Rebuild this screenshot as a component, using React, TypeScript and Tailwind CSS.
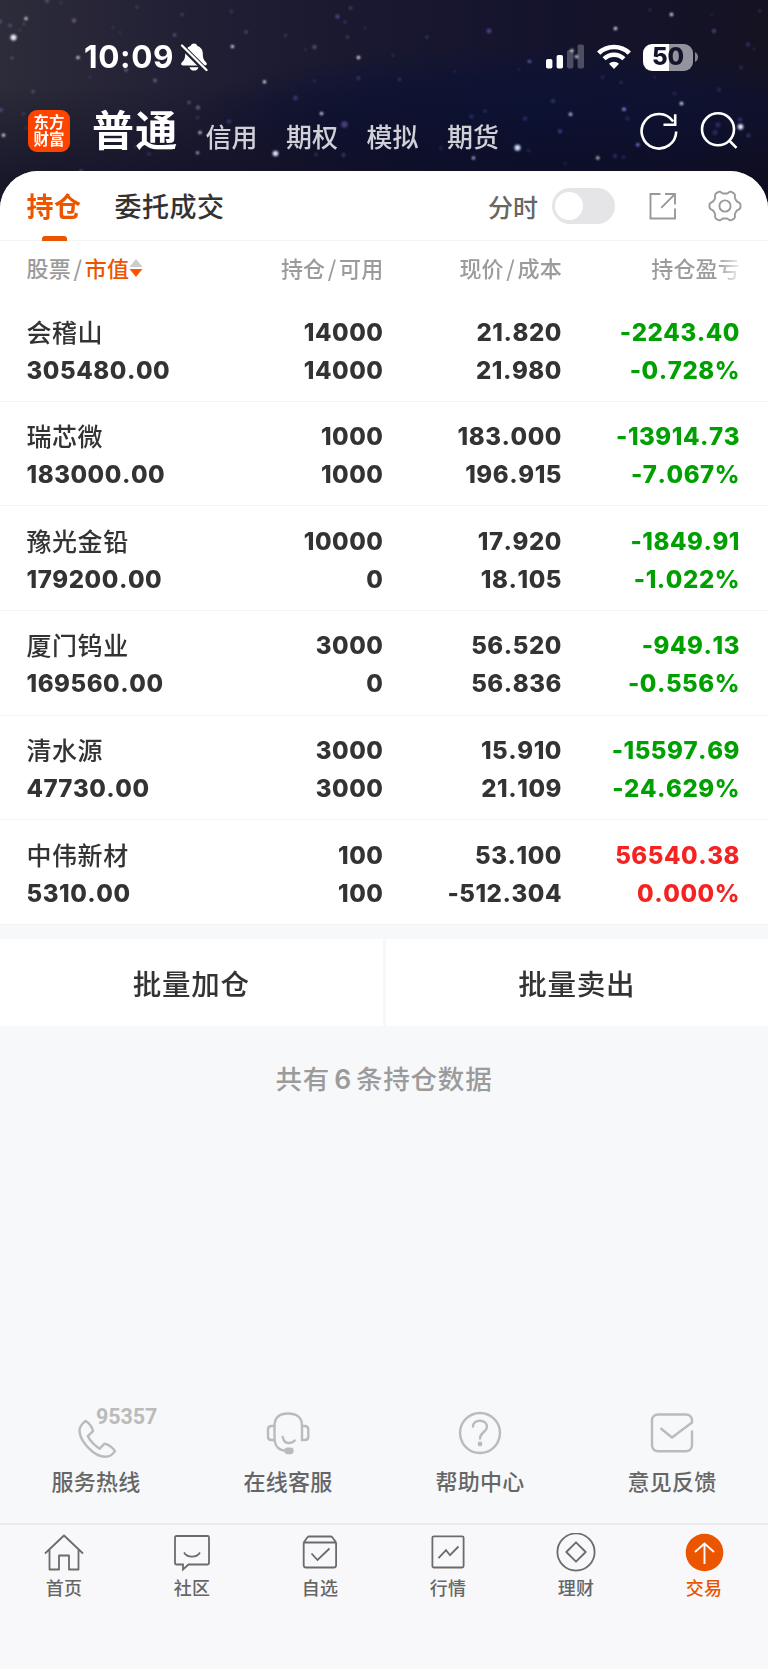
import React from "react";

const cjk = "font-['Noto_Sans_CJK_SC','Noto_Sans',sans-serif]";
const num = "font-['Inter','Noto_Sans_CJK_SC',sans-serif]";

// x, y, radius, colour, opacity
const stars: [number, number, number, string, number][] = [
  [26, 18.5, 1.6, "#ffffff", 0.9], [13.5, 37.5, 3, "#e8eaff", 1], [10, 25.5, 1.8, "#8a80b8", 0.6], [24, 24, 1.5, "#8a80b8", 0.5],
  [20, 30, 1.5, "#6f6796", 0.4], [0, 21.5, 2, "#8a80b8", 0.6], [74, 20.5, 2, "#a79cc8", 0.7], [47, 1, 2, "#8a80b8", 0.6],
  [61, 3, 1.4, "#6f6796", 0.5], [12, 58, 1.8, "#8a80b8", 0.5], [78, 57.5, 1.6, "#ffffff", 0.9], [126, 70, 2, "#8a80b8", 0.7],
  [155, 80.5, 2, "#9a8cc4", 0.7], [33, 91.5, 1.8, "#8a80b8", 0.6], [90, 77, 1.5, "#6f6796", 0.4], [113, 27.5, 1.5, "#6f6796", 0.4],
  [137, 7, 1.8, "#6f6796", 0.5], [120, 32.5, 1.2, "#6f6796", 0.4], [182, 14.5, 1.8, "#6f6796", 0.6], [174.5, 35, 1.8, "#8a80b8", 0.7],
  [232.5, 46.5, 1.6, "#ffffff", 0.95], [231.5, 11.5, 2, "#55508c", 0.6], [246, 32, 1.8, "#7468b8", 0.8], [285.5, 35.5, 1.8, "#55508c", 0.7],
  [264.5, 81.8, 1.6, "#ffffff", 0.95], [314.5, 47, 2.2, "#8c74b0", 0.7], [305.5, 49.5, 1.3, "#6f6796", 0.5], [337.5, 16.5, 2.2, "#6a5cc0", 0.8],
  [345, 22, 1.6, "#6f6796", 0.6], [350.5, 8, 1.8, "#6f6796", 0.7], [365, 28, 1.3, "#6f6796", 0.5], [347.5, 37, 1.8, "#6f6796", 0.6],
  [358.5, 57.5, 1.7, "#ffffff", 0.9], [358.5, 78, 2, "#5a5a9c", 0.6], [314.5, 81, 1.8, "#44447c", 0.6], [295.5, 98, 2.2, "#6a5cc0", 0.7],
  [321.5, 113.5, 1.6, "#ffffff", 0.95], [344.5, 124.5, 3.2, "#7d62c4", 0.75], [275.5, 153.5, 2.8, "#dfe4ff", 1], [197.5, 152.8, 1.5, "#c9ccff", 0.9],
  [200, 132.5, 1.6, "#ffffff", 0.85], [198, 107.5, 2, "#b08cc8", 0.8], [189, 102.5, 1.7, "#8a80b8", 0.7], [197.5, 117.5, 1.5, "#8a70a8", 0.5],
  [229, 121.5, 2.2, "#5c4c98", 0.7], [3.5, 135.2, 1.6, "#ffffff", 0.9], [1, 110, 2, "#7668b0", 0.7], [23.5, 113.5, 1.6, "#7668b0", 0.5],
  [26, 128, 1.5, "#7668b0", 0.4], [149, 154, 1.8, "#7668b0", 0.5], [135, 147, 1.5, "#7a5070", 0.5], [343.5, 155, 2, "#5a5aa8", 0.7],
  [316, 154.5, 2, "#44447c", 0.7], [81, 171, 1.5, "#b8b8d8", 0.6], [427, 37, 1.8, "#5a5aa8", 0.6], [489, 31, 2.4, "#6e60c4", 0.8],
  [393, 55.3, 1.5, "#5a5aa8", 0.5], [529.5, 61.5, 1.8, "#8090f0", 0.8], [519, 69.5, 1.5, "#44447c", 0.5], [399.5, 79.5, 2, "#5050a0", 0.6],
  [455, 71.5, 1.5, "#44447c", 0.5], [615.5, 28.5, 1.7, "#ffffff", 0.9], [671.5, 14.5, 1.7, "#ffffff", 0.9], [711.5, 14.5, 1.5, "#44447c", 0.5],
  [650, 10, 2, "#44447c", 0.5], [714, 31, 2.2, "#7a64b4", 0.7], [748, 44.5, 2, "#5a4c98", 0.7], [759.5, 11, 1.8, "#5a4c98", 0.5],
  [754, 49, 1.3, "#5a4c98", 0.5], [741, 67.5, 2, "#44447c", 0.6], [719, 89.5, 2, "#4c4890", 0.6], [674.5, 93.5, 2, "#4c4890", 0.5],
  [621, 82.5, 1.8, "#4c4890", 0.6], [602.5, 77, 2, "#4c4890", 0.5], [655, 77, 1.6, "#4c4890", 0.4], [553, 101, 2.2, "#5c54a8", 0.6],
  [485, 111, 1.8, "#5c54a8", 0.5], [471.5, 116.5, 2, "#5c54a8", 0.6], [525, 118.5, 2.2, "#5248a0", 0.6], [570.5, 114.3, 1.7, "#d8dcff", 0.9],
  [624, 109.2, 1.8, "#9aa0ff", 0.9], [681.5, 103.5, 1.7, "#ffffff", 0.9], [627.5, 118.5, 2, "#5248a0", 0.6], [560, 131.2, 2, "#6a6cd8", 0.7],
  [740.5, 126.7, 2.8, "#dfe4ff", 1], [740, 119.5, 2, "#5c54c8", 0.7], [748.5, 135.5, 2, "#5c54a8", 0.7], [718, 125, 2.4, "#5c54a8", 0.6],
  [715, 132.5, 2.6, "#5c54a8", 0.5], [637.8, 144.7, 1.8, "#7a84f0", 0.9], [517.5, 147.8, 3, "#cfe0ff", 1], [473.5, 157.9, 1.7, "#bcc8ff", 0.9],
  [597.8, 157.9, 1.7, "#e0e0f0", 0.9], [615, 156, 2.2, "#44449c", 0.7], [623.5, 157, 1.8, "#44449c", 0.7], [528.5, 150.5, 1.6, "#44449c", 0.7],
  [441, 148, 2, "#38387c", 0.6], [565, 163.5, 2, "#2c2c6c", 0.6], [572, 50.5, 1.6, "#ffffff", 0.9], [576.5, 56.7, 1.6, "#ffffff", 0.9],
];

function NightSky() {
  return (
    <svg className="absolute inset-0" width="768" height="240" viewBox="0 0 768 240" aria-hidden="true">
      <defs>
        <linearGradient id="sky" x1="0" y1="0" x2="1" y2="0">
          <stop offset="0" stopColor="#2d2c3a" />
          <stop offset="0.25" stopColor="#211f34" />
          <stop offset="0.48" stopColor="#191830" />
          <stop offset="0.75" stopColor="#14132c" />
          <stop offset="1" stopColor="#151222" />
        </linearGradient>
        <radialGradient id="blue" cx="0.5" cy="0.5" r="0.5">
          <stop offset="0" stopColor="#0d1436" />
          <stop offset="0.6" stopColor="#0e1333" stopOpacity="0.8" />
          <stop offset="1" stopColor="#0d1234" stopOpacity="0" />
        </radialGradient>
        <linearGradient id="fade" x1="0" y1="0" x2="0" y2="1">
          <stop offset="0.35" stopColor="#0b0a20" stopOpacity="0" />
          <stop offset="0.75" stopColor="#0b0a20" stopOpacity="0.6" />
        </linearGradient>
        <filter id="soft" x="-50%" y="-50%" width="200%" height="200%"><feGaussianBlur stdDeviation="0.8" /></filter>
      </defs>
      <rect width="768" height="240" fill="url(#sky)" />
      <ellipse cx="530" cy="118" rx="350" ry="72" fill="url(#blue)" />
      <rect width="768" height="240" fill="url(#fade)" />
      <g filter="url(#soft)">
        {stars.map(([x, y, r, c, o]) => (
          <circle key={`${x}-${y}`} cx={x} cy={y} r={r} fill={c} opacity={o < 0.85 ? o * 0.75 : o} />
        ))}
      </g>
    </svg>
  );
}

function StatusBar() {
  return (
    <div className={`${num} flex h-[114px] items-center pl-[84px] pr-[70px] text-white`}>
      <span className="w-[91px] whitespace-nowrap text-[31.5px] font-bold leading-none tracking-[0.6px]">10:09</span>
      <svg className="ml-[5px]" width="28" height="30" viewBox="0 0 28 30" aria-hidden="true">
        <path d="M14 1.500c-1.600 0-2.700.9-3.200 2.200-3.600 1.200-5.600 4-5.600 7.600 0 5-1 6.800-3 8.800-1.800 1.700-1.200 3.400.8 3.400h22c2 0 2.600-1.700.8-3.400-2-2-3-3.800-3-8.800 0-3.600-2-6.400-5.600-7.600C16.700 2.400 15.600 1.500 14 1.500Z" fill="#fff" />
        <path d="M9.500 25.200h9c-.4 2-2.200 3.400-4.500 3.400s-4.100-1.400-4.500-3.400Z" fill="#fff" />
        <path d="M-.5 2 27 29.500" stroke="#20202f" strokeWidth="5.400" />
        <path d="M2 3.500 26.500 28" stroke="#fff" strokeWidth="2.300" strokeLinecap="round" />
      </svg>
      <svg className="ml-auto" width="39" height="26" viewBox="0 0 39 26" fill="#fff" aria-hidden="true">
        <rect x="0" y="15" width="6.400" height="9.500" rx="1.700" />
        <rect x="10.600" y="11" width="6.400" height="13.500" rx="1.700" />
        <rect x="21" y="6" width="6.400" height="18.500" rx="1.700" opacity="0.25" />
        <rect x="31.600" y="0.500" width="6.400" height="24" rx="1.700" opacity="0.25" />
      </svg>
      <svg className="ml-[12px]" width="34" height="26" viewBox="0 0 34 26" fill="none" stroke="#fff" aria-hidden="true">
        <path d="M1.700 9.200C10 .9 24 .9 32.300 9.200" strokeWidth="4.600" />
        <path d="M7.100 14.800c5.500-5.400 14.300-5.400 19.800 0" strokeWidth="4.400" />
        <path d="M17 25l-5-5.200c2.800-2.700 7.200-2.700 10 0Z" fill="#fff" stroke="none" />
      </svg>
      <div className="ml-[12px] flex h-[27px] w-[50px] items-center justify-center overflow-hidden rounded-[9px] bg-[linear-gradient(90deg,#fff_51%,#93939d_51%)]">
        <span className="text-[24px] font-extrabold leading-none text-[#13132b]">50</span>
      </div>
      <svg className="ml-[2px]" width="3" height="10" viewBox="0 0 3 10" aria-hidden="true"><path d="M0 0C4 2 4 8 0 10Z" fill="#85858f" /></svg>
    </div>
  );
}

function TopNav() {
  return (
    <div className={`${cjk} flex h-[57px] items-start pl-[28px] pr-[28px] text-white`}>
      <div className="mt-[-4px] h-[42px] w-[42px] rounded-[9px] bg-[#ff4400] pt-[3px] text-center text-[15.500px] font-bold leading-[17px]">
        东方
        <br />
        财富
      </div>
      <span className="ml-[22px] mt-[-8px] text-[42px] font-bold leading-[44px] tracking-[1.200px]">普通</span>
      <div className="ml-[27px] mt-[7px] flex gap-[28.500px] text-[26px] font-medium leading-[30px] text-[#d0d0d7]">
        <span>信用</span>
        <span>期权</span>
        <span>模拟</span>
        <span>期货</span>
      </div>
      <svg className="ml-auto mt-[-4px]" width="40" height="42" viewBox="0 0 40 42" fill="none" stroke="#fff" strokeWidth="2.600" aria-hidden="true">
        <path d="M37.200 21.500A17.300 17.300 0 1 1 34.200 11.500" />
        <path d="M36.200 4.200v10.600H24.500" />
      </svg>
      <svg className="ml-[21px] mt-[-4px]" width="40" height="42" viewBox="0 0 40 42" fill="none" stroke="#fff" strokeWidth="2.600" aria-hidden="true">
        <circle cx="18" cy="19.300" r="16" />
        <path d="M29.200 30.500l7.300 7.300" />
      </svg>
    </div>
  );
}

function gearPath() {
  const pts: string[] = [];
  for (let i = 0; i <= 180; i++) {
    const a = (i / 180) * Math.PI * 2;
    const r = 14 + 1.6 * Math.tanh(1.8 * Math.cos(6 * a));
    pts.push(`${(17 + r * Math.cos(a)).toFixed(2)} ${(17 + r * Math.sin(a)).toFixed(2)}`);
  }
  return `M${pts.join("L")}Z`;
}

function PanelTabs() {
  return (
    <div className={`${cjk} flex h-[70px] border-b border-[#f3f3f5] pl-[26.500px] pr-[26px] text-[27px] leading-[70px]`}>
      <div className="relative font-bold tracking-[0.500px] text-[#ec5500]">
        持仓
        <span className="absolute bottom-[-1px] left-[15px] h-[5px] w-[25px] rounded-t-[3px] bg-[#ec5500]" />
      </div>
      <div className="ml-[33px] font-medium tracking-[0.500px] text-[#333]">委托成交</div>
      <div className="ml-auto flex items-center pt-px">
        <span className="-mt-px text-[25px] font-medium text-[#666]">分时</span>
        <span className="ml-[14px] flex h-[36px] w-[63px] items-center rounded-full bg-[#e5e5e7] pl-[3px]">
          <span className="h-[28px] w-[28px] rounded-full bg-white" />
        </span>
        <svg className="ml-[33px]" width="29" height="29" viewBox="0 0 29 29" fill="none" stroke="#999" strokeWidth="1.900" aria-hidden="true">
          <path d="M12.500 2H2.500v24.500H27V16.500M17 2h10v10.500M27 2 13.200 15.800" />
        </svg>
        <svg className="ml-[31px]" width="34" height="34" viewBox="0 0 34 34" fill="none" stroke="#999" strokeWidth="1.900" strokeLinejoin="round" aria-hidden="true">
          <path d={gearPath()} />
          <circle cx="17" cy="17" r="5.600" />
        </svg>
      </div>
    </div>
  );
}

const cols = "grid grid-cols-[197px_160px_178.500px_178px] pl-[26.500px]";

function ColumnHead() {
  return (
    <div className={`${cjk} ${cols} h-[56px] text-[22px] font-medium leading-[53px] tracking-[0.200px] text-[#9b9b9b]`}>
      <div className="flex h-[53px] items-center">
        <span>股票</span>
        <span className="mx-[2.500px]">/</span>
        <span className="text-[#ec5500]">市值</span>
        <svg className="mt-px" width="14" height="20" viewBox="0 0 14 20" aria-hidden="true">
          <path d="M7 1l6.500 8H.500Z" fill="#ccc" />
          <path d="M7 19l6.500-8H.500Z" fill="#ff5500" />
        </svg>
      </div>
      <div className="text-right">持仓<span className="mx-[2.500px]">/</span>可用</div>
      <div className="text-right">现价<span className="mx-[2.500px]">/</span>成本</div>
      <div className="bg-[linear-gradient(90deg,#9b9b9b_155px,#fff_182px)] bg-clip-text text-right text-transparent">持仓盈亏</div>
    </div>
  );
}

type Row = { name: string; value: string; held: string; free: string; price: string; cost: string; gain: string; pct: string; up?: boolean };

const rows: Row[] = [
  { name: "会稽山", value: "305480.00", held: "14000", free: "14000", price: "21.820", cost: "21.980", gain: "-2243.40", pct: "-0.728%" },
  { name: "瑞芯微", value: "183000.00", held: "1000", free: "1000", price: "183.000", cost: "196.915", gain: "-13914.73", pct: "-7.067%" },
  { name: "豫光金铅", value: "179200.00", held: "10000", free: "0", price: "17.920", cost: "18.105", gain: "-1849.91", pct: "-1.022%" },
  { name: "厦门钨业", value: "169560.00", held: "3000", free: "0", price: "56.520", cost: "56.836", gain: "-949.13", pct: "-0.556%" },
  { name: "清水源", value: "47730.00", held: "3000", free: "3000", price: "15.910", cost: "21.109", gain: "-15597.69", pct: "-24.629%" },
  { name: "中伟新材", value: "5310.00", held: "100", free: "100", price: "53.100", cost: "-512.304", gain: "56540.38", pct: "0.000%", up: true },
];

function HoldingRow({ r }: { r: Row }) {
  return (
    <div className={`${num} ${cols} h-[104.650px] border-b border-[#f3f3f5] pt-[16.500px] text-[24px] font-extrabold leading-[38px] tracking-[0.550px] text-[#333] [font-kerning:none]`}>
      <div>
        <div className={`${cjk} -mt-[2px] mb-[2px] h-[38px] text-[25px] font-medium`}>{r.name}</div>
        <div>{r.value}</div>
      </div>
      <div className="text-right"><div>{r.held}</div><div>{r.free}</div></div>
      <div className="text-right"><div>{r.price}</div><div>{r.cost}</div></div>
      <div className={`text-right ${r.up ? "text-[#f52222]" : "text-[#00a000]"}`}><div>{r.gain}</div><div>{r.pct}</div></div>
    </div>
  );
}

const g = { fill: "none", stroke: "#bbb", strokeWidth: 2.4, strokeLinecap: "round", strokeLinejoin: "round" } as const;

function Services() {
  const items = [
    {
      label: "服务热线",
      icon: (
        <div className="relative">
          <svg className="overflow-visible" width="44" height="44" viewBox="0 0 44 44" {...g} aria-hidden="true">
            <path d="M11.500 9.800c-3.300 2.800-6 6-6 9.500C5.500 30 20 45.800 31.500 45.800c3.500 0 7-2 9.500-5.700-2.600-3.800-6.300-6.500-10.500-7.500l-5 5.200C20.500 34.300 16 30 13.800 25.100l5.200-5C18 16 15.300 12.300 11.500 9.800Z" />
          </svg>
          <span className="absolute left-[22px] top-[-6px] font-['Roboto',sans-serif] text-[21.500px] font-bold leading-[24px] tracking-[-0.100px] text-[#bbb]">95357</span>
        </div>
      ),
    },
    {
      label: "在线客服",
      icon: (
        <svg width="44" height="44" viewBox="0 0 44 44" {...g} aria-hidden="true">
          <path d="M8.500 14.500C8.500 6.500 13.500 2.500 22 2.500s14 4 14 12V29M8.500 14.500V27c0 8 4.500 12.800 12 12.800" />
          <path d="M8.500 15H5.700C3.500 15 2 16.300 2 18.300v7.400C2 27.700 3.500 29 5.700 29h2.800M36 15h2.600c2.200 0 3.700 1.300 3.700 3.300v7.400c0 2-1.500 3.300-3.700 3.300H36" />
          <path d="M16.700 26c.8 4 2.800 6 6 6 2.700 0 4.600-.8 6-2.500" />
          <rect x="19.500" y="37.600" width="7" height="4.400" rx="2.200" fill="#bbb" />
        </svg>
      ),
    },
    {
      label: "帮助中心",
      icon: (
        <svg width="44" height="44" viewBox="0 0 44 44" {...g} aria-hidden="true">
          <circle cx="22" cy="22" r="20" />
          <path d="M15 15.500C15 12 18 9.700 22 9.700s7 2.600 7 6c0 5-7 5.800-7 11.800" />
          <circle cx="22" cy="33" r="1.200" fill="#bbb" />
        </svg>
      ),
    },
    {
      label: "意见反馈",
      icon: (
        <svg width="44" height="44" viewBox="0 0 44 44" {...g} aria-hidden="true">
          <path d="M42 20.500V34c0 3.800-2.500 6.200-6.200 6.200H8.200C4.500 40.200 2 37.800 2 34V9.500c0-3.700 2.500-6 6.200-6h27.600c3.700 0 6.200 2.300 6.200 6v2L22 26.500 11.200 17.700" />
        </svg>
      ),
    },
  ];
  return (
    <div className={`${cjk} grid grid-cols-4`}>
      {items.map((it) => (
        <div key={it.label} className="flex flex-col items-center">
          {it.icon}
          <span className="mt-[7px] text-[22px] font-medium leading-[36px] tracking-[0.200px] text-[#666]">{it.label}</span>
        </div>
      ))}
    </div>
  );
}

function BottomBar() {
  const s = { width: 40, height: 40, viewBox: "0 0 40 40", fill: "none", stroke: "#6b6b6b", strokeWidth: 1.8 } as const;
  const items = [
    { label: "首页", icon: <svg {...s} aria-hidden="true"><path d="M1 20.500 20 2.500l19 18M5.500 17v19.500H15V22.500h10v14h9.500V17" strokeLinejoin="round" /></svg> },
    { label: "社区", icon: <svg {...s} aria-hidden="true"><path d="M4.500 3h31c1 0 1.500.5 1.500 1.500V30c0 1-.5 1.500-1.500 1.500H16.500L11 36.500v-5H4.500C3.500 31.500 3 31 3 30V4.500C3 3.500 3.500 3 4.500 3ZM12 19.500c3.500 5.600 12.500 5.600 16 0" /></svg> },
    { label: "自选", icon: <svg {...s} aria-hidden="true"><path d="M3.700 9.500v22.800c0 1.400.8 2.200 2.200 2.200h28c1.400 0 2.200-.8 2.200-2.200V9.500M3.700 9.500h32.400M3.700 9.500l3.800-5.200c.4-.5.8-.8 1.500-.8h21.800c.7 0 1.100.3 1.500.8l3.800 5.200M11.500 20.500l6 6.500L29.500 15.500" /></svg> },
    { label: "行情", icon: <svg {...s} aria-hidden="true"><rect x="4.400" y="3.300" width="31.200" height="31.200" rx="1.500" /><path d="M10.500 25.200l7.500-8 4 5L30.500 13.500" /></svg> },
    { label: "理财", icon: <svg {...s} aria-hidden="true"><circle cx="20" cy="19" r="18.600" /><path d="M20 9.300l9.700 9.700-9.700 9.700-9.700-9.700Z" strokeLinejoin="round" /></svg> },
    { label: "交易", icon: <svg {...s} aria-hidden="true"><circle cx="20.500" cy="19.500" r="18.800" fill="#ec5500" stroke="none" /><path d="M20.500 31V10.500M11 19l9.500-8.500L30 19" stroke="#fff" strokeWidth="1.900" /></svg>, active: true },
  ];
  return (
    <div className={`${cjk} grid h-[146px] grid-cols-6 border-t-2 border-[#e9eaee] bg-[#f8f8fb]`}>
      {items.map((it) => (
        <div key={it.label} className="flex flex-col items-center pt-[7.500px]">
          {it.icon}
          <span className={`mt-[-1px] text-[18px] font-medium leading-[30px] tracking-[0.300px] ${it.active ? "text-[#ec5500]" : "text-[#666]"}`}>{it.label}</span>
        </div>
      ))}
    </div>
  );
}

export default function App() {
  return (
    <div className="relative flex h-[1669px] w-[768px] flex-col overflow-hidden bg-[#f7f8fa]">
      <NightSky />
      <div className="relative flex flex-1 flex-col">
        <StatusBar />
        <TopNav />
        <div className="overflow-hidden rounded-t-[38px] bg-[#f7f8fa]">
          <div className="bg-white">
            <PanelTabs />
            <ColumnHead />
            {rows.map((r) => (
              <HoldingRow key={r.name} r={r} />
            ))}
          </div>
          <div className={`${cjk} mt-[14px] grid grid-cols-2 gap-[3px] text-center text-[28.500px] font-medium leading-[87px] tracking-[0.800px] text-[#333]`}>
            <div className="h-[87px] bg-white">批量加仓</div>
            <div className="h-[87px] bg-white">批量卖出</div>
          </div>
        </div>
        <div className={`${cjk} flex flex-1 flex-col bg-[#f7f8fa]`}>
          <p className="mt-[33px] text-center text-[26.500px] font-medium leading-[38px] tracking-[0.800px] text-[#9b9b9b]">
            共有<span className={`${num} mx-[4px] font-semibold`}>6</span>条持仓数据
          </p>
          <div className="mt-auto mb-[25px]">
            <Services />
          </div>
          <BottomBar />
        </div>
      </div>
    </div>
  );
}
